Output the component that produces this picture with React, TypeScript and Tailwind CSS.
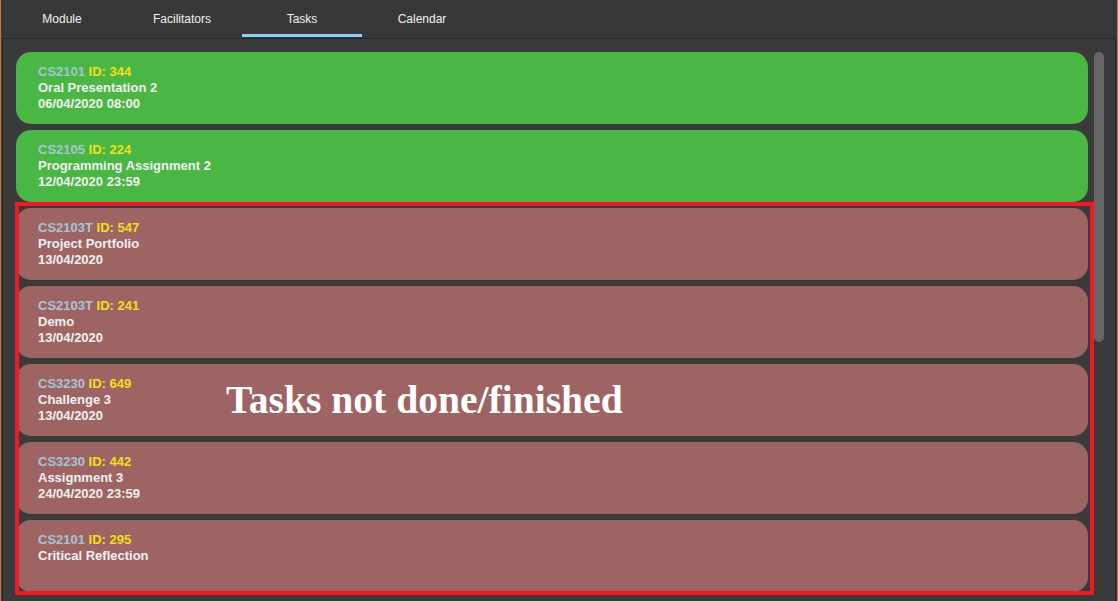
const tabs = ["Module", "Facilitators", "Tasks", "Calendar"];

const tasks = [
  { code: "CS2101", id: 344, title: "Oral Presentation 2", due: "06/04/2020 08:00", done: true },
  { code: "CS2105", id: 224, title: "Programming Assignment 2", due: "12/04/2020 23:59", done: true },
  { code: "CS2103T", id: 547, title: "Project Portfolio", due: "13/04/2020", done: false },
  { code: "CS2103T", id: 241, title: "Demo", due: "13/04/2020", done: false },
  { code: "CS3230", id: 649, title: "Challenge 3", due: "13/04/2020", done: false },
  { code: "CS3230", id: 442, title: "Assignment 3", due: "24/04/2020 23:59", done: false },
  { code: "CS2101", id: 295, title: "Critical Reflection", due: "", done: false },
];

export default function App() {
  return (
    <div
      className="relative w-[1118px] h-[601px] overflow-hidden bg-[#3a3a3a] border-x border-[#c8783a] font-['Liberation_Sans',Arial,sans-serif]"
    >
      {/* tab bar */}
      <div className="flex h-[38px] bg-[#383838] pl-[1px]">
        {tabs.map((t) => (
          <div
            key={t}
            className="relative w-[120px] flex items-center justify-center pb-[1px] text-[12px] text-[#f2f2f2]"
          >
            {t}
            {t === "Tasks" && (
              <div className="absolute left-0 right-0 bottom-[1px] h-[3px] bg-[#86cffa]" />
            )}
          </div>
        ))}
      </div>

      {/* content panel */}
      <div className="mx-[1px] h-[563px] flex border-t border-x border-[#262626] pl-[13px] pr-[11px] pt-[13px] bg-[#3a3a3a]">
        <div className="w-[1072px] flex flex-col gap-[6px]">
          {tasks.map((t) => (
            <div
              key={t.id}
              className={`h-[72px] shrink-0 rounded-[15px] pl-[22px] pt-[12px] text-[13px] leading-[16px] font-bold ${
                t.done ? "bg-[#4ab644]" : "bg-[#9e6464]"
              }`}
            >
              <div>
                <span className="text-[#a6c6d6]">{t.code}</span>{" "}
                <span className="text-[#f2e01c]">ID: {t.id}</span>
              </div>
              <div className="text-[#f2f2f2]">{t.title}</div>
              {t.due && <div className="text-[#f2f2f2]">{t.due}</div>}
            </div>
          ))}
        </div>
        <div className="ml-[6px] w-[10px] h-[290px] rounded-[5px] bg-[#666666]" />
      </div>

      {/* annotation */}
      <div className="absolute left-[14px] top-[202px] w-[1079px] h-[393px] border-4 border-[#ed1c24] pointer-events-none" />
      <div className="absolute left-[225px] top-[377px] text-[39.6px] leading-[46px] font-bold text-white font-['Liberation_Serif','Times_New_Roman',serif]">
        Tasks not done/finished
      </div>
    </div>
  );
}
